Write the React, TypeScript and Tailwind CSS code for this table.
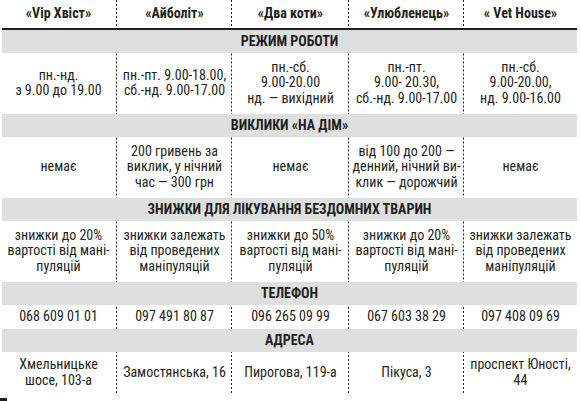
import React from "react";

const FONT = { fontFamily: '"Liberation Sans Narrow", "Roboto Condensed", "DejaVu Sans Condensed", Roboto, sans-serif' };

const cols = ["«Vip Хвіст»", "«Айболіт»", "«Два коти»", "«Улюбленець»", "« Vet House»"];

type Row = { title: string; h: string; cells: React.ReactNode[] };

const rows: Row[] = [
  {
    title: "РЕЖИМ РОБОТИ",
    h: "h-[61px]",
    cells: [
      <>пн.-нд.<br />з 9.00 до 19.00</>,
      <>пн.-пт. 9.00-18.00,<br />сб.-нд. 9.00-17.00</>,
      <>пн.-сб.<br />9.00-20.00<br />нд. — вихідний</>,
      <>пн.-пт.<br />9.00- 20.30,<br />сб.-нд. 9.00-17.00</>,
      <>пн.-сб.<br />9.00-20.00,<br />нд. 9.00-16.00</>,
    ],
  },
  {
    title: "ВИКЛИКИ «НА ДІМ»",
    h: "h-[61px]",
    cells: [
      <>немає</>,
      <>200 гривень за<br />виклик, у нічний<br />час — 300 грн</>,
      <>немає</>,
      <>від 100 до 200 —<br />денний, нічний ви-<br />клик — дорожчий</>,
      <>немає</>,
    ],
  },
  {
    title: "ЗНИЖКИ ДЛЯ ЛІКУВАННЯ БЕЗДОМНИХ ТВАРИН",
    h: "h-[61px]",
    cells: [
      <>знижки до 20%<br />вартості від мані-<br />пуляцій</>,
      <>знижки залежать<br />від проведених<br />маніпуляцій</>,
      <>знижки до 50%<br />вартості від мані-<br />пуляцій</>,
      <>знижки до 20%<br />вартості від мані-<br />пуляцій</>,
      <>знижки залежать<br />від проведених<br />маніпуляцій</>,
    ],
  },
  {
    title: "ТЕЛЕФОН",
    h: "h-[24px]",
    cells: [
      <>068 609 01 01</>,
      <>097 491 80 87</>,
      <>096 265 09 99</>,
      <>067 603 38 29</>,
      <>097 408 09 69</>,
    ],
  },
  {
    title: "АДРЕСА",
    h: "h-[42px]",
    cells: [
      <>Хмельницьке<br />шосе, 103-а</>,
      <>Замостянська, 16</>,
      <>Пирогова, 119-а</>,
      <>Пікуса, 3</>,
      <>проспект Юності,<br />44</>,
    ],
  },
];

function Cells({ items, h, bold }: { items: React.ReactNode[]; h: string; bold?: boolean }) {
  return (
    <div className={`grid grid-cols-[117px_115px_117px_115px_1fr] ${h}`}>
      {items.map((c, i) =>
        i < 4 ? (
          <div
            key={i}
            className={`flex items-center justify-center text-center bg-[linear-gradient(#231f20_50%,transparent_50%)] bg-[length:1px_4px] bg-repeat-y bg-right ${bold ? "font-bold" : ""} leading-[15.5px]`}
          >
            <div>{c}</div>
          </div>
        ) : (
          <div
            key={i}
            className={`flex items-center justify-center text-center ${bold ? "font-bold" : ""} leading-[15.5px]`}
          >
            <div>{c}</div>
          </div>
        )
      )}
    </div>
  );
}

export default function App() {
  return (
    <div className="w-[580px] h-[401px] bg-white relative overflow-hidden text-[14px] text-[#231f20]" style={FONT}>
      <div className="pr-[3px]">
        <Cells items={cols} h="h-[28px]" bold />
        <div className="h-[1.5px] bg-[#231f20] ml-[2px]" />
        {rows.map((r) => (
          <div key={r.title}>
            <div className="h-[23px] ml-[2px] bg-[#dedfdf] flex items-center justify-center font-bold">{r.title}</div>
            <Cells items={r.cells} h={r.h} />
          </div>
        ))}
      </div>
      <div className="absolute left-0 bottom-0 w-[7px] h-[3px] bg-[#231f20]" />
    </div>
  );
}
